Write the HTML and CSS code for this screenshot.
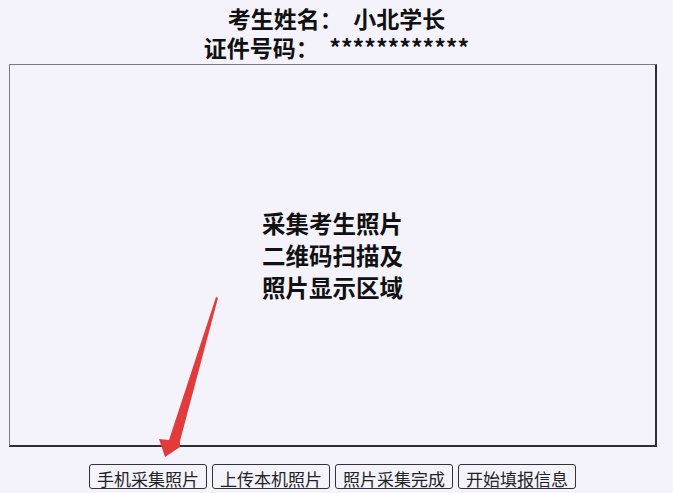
FILE: index.html
```html
<!DOCTYPE html>
<html lang="zh-CN">
<head>
<meta charset="utf-8">
<title>照片采集</title>
<link rel="stylesheet" href="styles.css">
</head>
<body>
<div class="page">
  <header class="info">
    <div class="info-row">考生姓名：&nbsp; 小北学长</div>
    <div class="info-row">证件号码：&nbsp; ************</div>
  </header>
  <section class="photo-area">
    <p class="photo-hint">采集考生照片<br>二维码扫描及<br>照片显示区域</p>
  </section>
  <nav class="actions">
    <button class="btn" type="button">手机采集照片</button>
    <button class="btn" type="button">上传本机照片</button>
    <button class="btn" type="button">照片采集完成</button>
    <button class="btn" type="button">开始填报信息</button>
  </nav>
  <svg class="pointer" width="673" height="493" viewBox="0 0 673 493" aria-hidden="true">
    <polygon points="216,297 218,298 180,441 180,447 165,457 159,439 169,440" fill="#e23b3b"/>
  </svg>
</div>
</body>
</html>
```

FILE: styles.css
```css
html, body {
  margin: 0;
  padding: 0;
  background: #f4f3fb;
}

.page {
  position: relative;
  width: 673px;
  height: 493px;
  overflow: hidden;
  font-family: "Noto Sans CJK SC", "Liberation Sans", sans-serif;
  color: #111;
}

.info {
  display: flex;
  flex-direction: column;
  align-items: center;
  padding-top: 4px;
}

.info-row {
  font-size: 23px;
  font-weight: 700;
  line-height: 29px;
  white-space: pre;
}

.photo-area {
  box-sizing: border-box;
  margin: 2px 16px 0 9px;
  height: 383px;
  border-top: 1px solid #7a7a80;
  border-left: 1px solid #7a7a80;
  border-right: 2px solid #2e2e33;
  border-bottom: 2px solid #2e2e33;
  display: flex;
  align-items: center;
  justify-content: center;
}

.photo-hint {
  margin: 0;
  font-size: 23.5px;
  font-weight: 700;
  line-height: 32px;
  text-align: center;
}

.actions {
  display: flex;
  justify-content: center;
  gap: 5px;
  margin-top: 17px;
  padding-right: 8px;
}

.btn {
  box-sizing: border-box;
  width: 118px;
  height: 25px;
  padding: 0;
  overflow: visible;
  font-family: "Noto Sans CJK SC", sans-serif;
  font-size: 17px;
  line-height: 27px;
  color: #222;
  background: #f4f3fb;
  border: 1px solid #333;
  border-radius: 3px;
}

.pointer {
  position: absolute;
  left: 0;
  top: 0;
  pointer-events: none;
}
```
